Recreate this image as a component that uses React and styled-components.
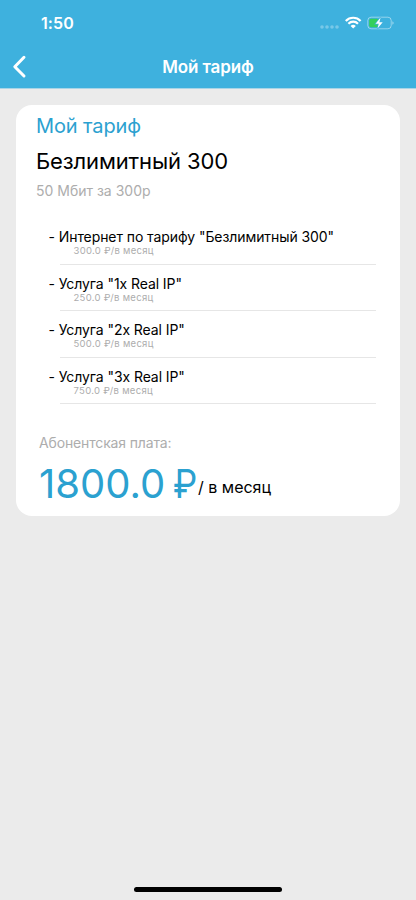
import React from "react";
import styled, { createGlobalStyle } from "styled-components";

const colors = {
  header: "#3eb1de",
  accent: "#2ba1d0",
  page: "#ebebeb",
  muted: "#adadad",
  line: "#e6e6e6",
};

const services = [
  { title: 'Интернет по тарифу "Безлимитный 300"', price: "300.0" },
  { title: 'Услуга "1x Real IP"', price: "250.0" },
  { title: 'Услуга "2x Real IP"', price: "500.0" },
  { title: 'Услуга "3x Real IP"', price: "750.0" },
];

const GlobalStyle = createGlobalStyle`
  * {
    box-sizing: border-box;
  }

  body {
    margin: 0;
    background: ${colors.page};
    font-family: Inter, "Liberation Sans", sans-serif;
  }

  h1, h2, p, ul {
    margin: 0;
    padding: 0;
    font-weight: 400;
  }
`;

const Screen = styled.div`
  display: flex;
  flex-direction: column;
  width: 416px;
  height: 900px;
  background: ${colors.page};
  overflow: hidden;
`;

const Header = styled.header`
  height: 89px;
  background: ${colors.header};
  border-bottom: 1px solid #a9d5e7;
  color: white;
`;

const StatusBar = styled.div`
  display: flex;
  align-items: center;
  justify-content: space-between;
  height: 46px;
  padding: 0 22px 0 41px;
`;

const Time = styled.span`
  font-size: 16px;
  font-weight: 600;
  letter-spacing: 0.1px;
`;

const StatusIcons = styled.div`
  display: flex;
  align-items: center;
  height: 16px;
`;

const NavBar = styled.div`
  display: grid;
  grid-template-columns: 60px 1fr 60px;
  align-items: center;
  height: 42px;
`;

const BackButton = styled.button`
  display: flex;
  border: none;
  padding: 0 0 0 12px;
  background: none;
  color: white;
`;

const NavTitle = styled.h1`
  font-size: 17px;
  line-height: 22px;
  font-weight: 600;
  letter-spacing: -0.1px;
  text-align: center;
`;

const Card = styled.main`
  height: 411px;
  margin: 16px 16px 0;
  padding: 8px 24px 0 20px;
  background: white;
  border-radius: 16px;
`;

const Text = styled.p`
  font-size: ${props => props.$size}px;
  line-height: ${props => props.$line}px;
  color: ${props => props.$color || "black"};
  letter-spacing: ${props => props.$spacing || "0"};
  white-space: nowrap;
`;

const ServiceList = styled.ul`
  margin-top: 18px;
  list-style: none;
`;

const ServiceItem = styled.li`
  height: 46.5px;
  padding: 12px 0 0 12px;
`;

const ServiceBody = styled.div`
  height: 35.5px;
  margin-left: 12px;
  border-bottom: 1px solid ${colors.line};
`;

const ServiceTitle = styled(Text)`
  margin-left: -11.5px;
`;

const ServicePrice = styled(Text)`
  margin-left: 13.5px;
`;

const Total = styled.section`
  padding: 30px 0 0 3px;
`;

const TotalRow = styled.div`
  display: flex;
  align-items: flex-end;
  margin-top: 8px;
`;

const Currency = styled.span`
  display: inline-block;
  margin: 0 -1px 0 -4px;
  font-family: Roboto, sans-serif;
  transform: scaleX(0.86);
`;

const Period = styled(Text)`
  padding-bottom: 10px;
`;

const HomeIndicator = styled.div`
  width: 148px;
  height: 5px;
  margin: auto auto 8px;
  border-radius: 3px;
  background: black;
`;

const Signal = () => (
  <svg width="19" height="16" viewBox="0 0 19 16" fill="white" opacity="0.3">
    <circle cx="2" cy="12" r="1.8" />
    <circle cx="7" cy="12" r="1.8" />
    <circle cx="12" cy="12" r="1.8" />
    <circle cx="17" cy="12" r="1.8" />
  </svg>
);

const Wifi = () => (
  <svg width="28" height="16" viewBox="0 0 28 16" fill="none" stroke="white" strokeWidth="2.2">
    <path d="M6.8 5.9a10.3 10.3 0 0 1 14.8 0" />
    <path d="M9.4 8.7a6.8 6.8 0 0 1 9.6 0" />
    <path d="M11.6 11a3.8 3.8 0 0 1 5.2 0l-2.6 2.6z" fill="white" stroke="none" />
  </svg>
);

const Battery = () => (
  <svg width="27" height="16" viewBox="0 0 27 16">
    <rect x="0.8" y="2.2" width="23.4" height="11.6" rx="3.3" fill="none" stroke="white" strokeOpacity="0.45" />
    <path d="M25.4 6.2v3.6c1.6-.7 1.6-2.9 0-3.6z" fill="white" fillOpacity="0.5" />
    <rect x="2.2" y="3.7" width="9.3" height="8.6" rx="1.8" fill="#34cf5b" />
    <path
      d="M13.6 2.5 8.6 8.8h3.2l-1.3 4.8 5.2-6.4h-3.3z"
      fill="white"
      stroke={colors.header}
      strokeWidth="1.4"
      paintOrder="stroke"
    />
  </svg>
);

const Chevron = () => (
  <svg width="15" height="24" viewBox="0 0 15 24" fill="none" stroke="currentColor" strokeWidth="3" strokeLinecap="round" strokeLinejoin="round">
    <path d="M12 2.3 2.8 11.7 12 21" />
  </svg>
);

const Service = ({ title, price }) => (
  <ServiceItem>
    <ServiceBody>
      <ServiceTitle $size={14} $line={16} $spacing="-0.08px">
        - {title}
      </ServiceTitle>
      <ServicePrice $size={9.5} $line={11} $color={colors.muted} $spacing="0.3px">
        {price} ₽/в месяц
      </ServicePrice>
    </ServiceBody>
  </ServiceItem>
);

const App = () => {
  return (
    <Screen>
      <GlobalStyle />
      <Header>
        <StatusBar>
          <Time>1:50</Time>
          <StatusIcons>
            <Signal />
            <Wifi />
            <Battery />
          </StatusIcons>
        </StatusBar>
        <NavBar>
          <BackButton aria-label="Назад">
            <Chevron />
          </BackButton>
          <NavTitle>Мой тариф</NavTitle>
        </NavBar>
      </Header>
      <Card>
        <Text as="h2" $size={20} $line={26} $color={colors.accent} $spacing="-0.1px">
          Мой тариф
        </Text>
        <Text $size={22} $line={44} $spacing="-0.13px">
          Безлимитный 300
        </Text>
        <Text $size={14} $line={16} $color={colors.muted}>
          50 Мбит за 300р
        </Text>
        <ServiceList>
          {services.map(service => (
            <Service key={service.title} {...service} />
          ))}
        </ServiceList>
        <Total>
          <Text $size={14} $line={20} $color={colors.muted} $spacing="-0.15px">
            Абонентская плата:
          </Text>
          <TotalRow>
            <Text as="span" $size={40} $line={46} $color={colors.accent}>
              1800.0 <Currency>₽</Currency>
            </Text>
            <Period as="span" $size={16} $line={22}>
              / в месяц
            </Period>
          </TotalRow>
        </Total>
      </Card>
      <HomeIndicator />
    </Screen>
  );
};

export default App;
